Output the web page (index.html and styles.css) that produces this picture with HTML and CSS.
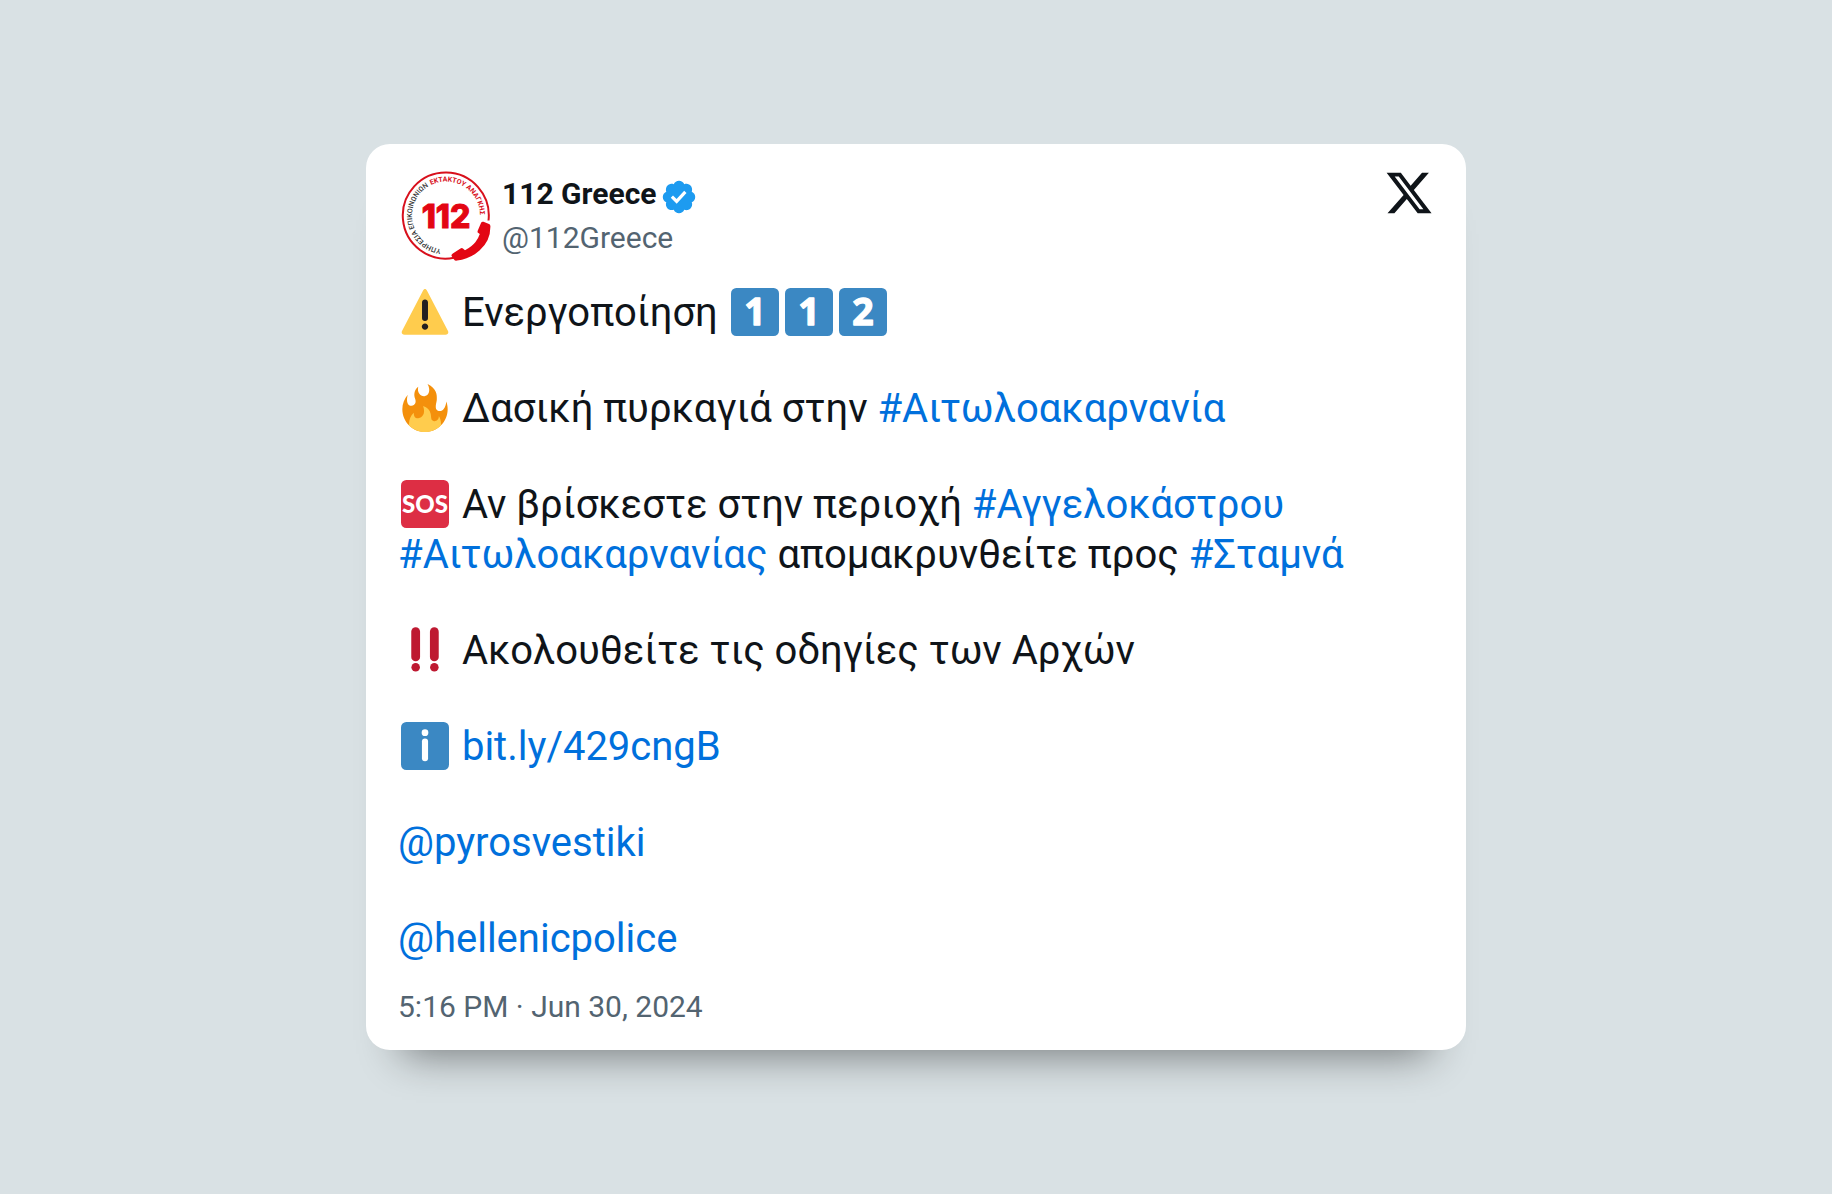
FILE: index.html
```html
<!DOCTYPE html>
<html lang="el">
<head>
    <meta charset="UTF-8">
    <meta name="viewport" content="width=device-width, initial-scale=1.0">
    <title>112 Greece</title>
    <link rel="stylesheet" href="styles.css">
</head>
<body>

    <article class="card">
        <header class="card-header">
            <svg class="avatar" viewBox="0 0 96 96" role="img" aria-label="112">
                <defs>
                    <path id="ring" d="M48 81.5a34 34 0 0 1 0-68a34 34 0 0 1 0 68" />
                </defs>
                <path class="avatar-ring" d="M90.500 52.500A43 43 0 1 0 56 89.800" />
                <text class="ring-text"><textPath href="#ring" startOffset="5">ΥΠΗΡΕΣΙΑ ΕΠΙΚΟΙΝΩΝΙΩΝ</textPath></text>
                <text class="ring-text ring-text-red"><textPath href="#ring" startOffset="91">ΕΚΤΑΚΤΟΥ ΑΝΑΓΚΗΣ</textPath></text>
                <text class="avatar-number" x="48" y="60">112</text>
                <path class="avatar-phone" d="M85.500 53.800L91 56Q92.500 56.500 92.400 58.500Q92.500 73 81.500 82.500Q72 91 59 92.600Q57 93 56 91.500L53.600 88Q53 86.500 54.800 85.400L62.500 80.500Q64 79.600 65.200 80.800L67 82.300Q74 78.500 77.500 74Q80.500 70 81.800 66L80 64.800Q79.200 64 79.800 62.500L83 55Q83.800 53.300 85.500 53.800Z" />
            </svg>
            <div class="author">
                <div class="author-name">
                    <span>112 Greece</span>
                    <svg class="verified" viewBox="0 0 22 22" aria-hidden="true">
                        <path d="M20.396 11c-.018-.646-.215-1.275-.57-1.816-.354-.54-.852-.972-1.438-1.246.223-.607.27-1.264.14-1.897-.131-.634-.437-1.218-.882-1.687-.47-.445-1.053-.75-1.687-.882-.633-.13-1.29-.083-1.897.14-.273-.587-.704-1.086-1.245-1.44S11.647 1.62 11 1.604c-.646.017-1.273.213-1.813.568s-.969.854-1.24 1.44c-.608-.223-1.267-.272-1.902-.14-.635.13-1.22.436-1.69.882-.445.47-.749 1.055-.878 1.688-.13.633-.08 1.29.144 1.896-.587.274-1.087.705-1.443 1.245-.356.54-.555 1.17-.574 1.817.02.647.218 1.276.574 1.817.356.54.856.972 1.443 1.245-.224.606-.274 1.263-.144 1.896.13.634.433 1.218.877 1.688.47.443 1.054.747 1.687.878.633.132 1.29.084 1.897-.136.274.586.705 1.084 1.246 1.439.54.354 1.17.551 1.816.569.647-.016 1.276-.213 1.817-.567s.972-.854 1.245-1.44c.604.239 1.266.296 1.903.164.636-.132 1.22-.447 1.68-.907.46-.46.776-1.044.908-1.681s.075-1.299-.165-1.903c.586-.274 1.084-.705 1.439-1.246.354-.54.551-1.17.569-1.816zM9.662 14.85l-3.429-3.428 1.293-1.302 2.072 2.072 4.4-4.794 1.347 1.246z" />
                    </svg>
                </div>
                <div class="author-handle">@112Greece</div>
            </div>
            <svg class="x-logo" viewBox="0 0 24 24" role="img" aria-label="X">
                <path d="M18.244 2.250h3.308l-7.227 8.260 8.502 11.240H16.170l-5.214-6.817L4.990 21.750H1.680l7.730-8.835L1.254 2.250H8.080l4.713 6.231zm-1.161 17.520h1.833L7.084 4.126H5.117z" />
            </svg>
        </header>

        <div class="card-text">
            <p>
                <svg class="emoji" viewBox="0 0 36 36" aria-hidden="true">
                    <path fill="#ffcc4d" d="M2.653 35C.811 35-.001 33.662.847 32.027L16.456 1.972c.849-1.635 2.238-1.635 3.087 0l15.609 30.056c.85 1.634.037 2.972-1.805 2.972H2.653z" />
                    <path fill="#231f20" d="M15.583 28.953c0-1.333 1.085-2.418 2.419-2.418 1.333 0 2.418 1.085 2.418 2.418 0 1.334-1.086 2.419-2.418 2.419-1.334 0-2.419-1.085-2.419-2.419zm.186-18.293c0-1.302.961-2.108 2.232-2.108 1.241 0 2.233.837 2.233 2.108v11.938c0 1.271-.992 2.108-2.233 2.108-1.271 0-2.232-.807-2.232-2.108V10.660z" />
                </svg>
                Ενεργοποίηση
                <svg class="emoji" viewBox="0 0 36 36"><rect class="key" width="36" height="36" rx="4" /><text class="key-digit" x="18" y="28">1</text></svg><svg class="emoji" viewBox="0 0 36 36"><rect class="key" width="36" height="36" rx="4" /><text class="key-digit" x="18" y="28">1</text></svg><svg class="emoji" viewBox="0 0 36 36"><rect class="key" width="36" height="36" rx="4" /><text class="key-digit" x="18" y="28">2</text></svg>
            </p>
            <p>
                <svg class="emoji" viewBox="0 0 36 36" aria-hidden="true">
                    <path fill="#f4900c" d="M35 19c0-2.062-.367-4.039-1.040-5.868-.46 5.389-3.333 8.157-6.335 6.868-2.812-1.208-.917-5.917-.777-8.164.236-3.809-.012-8.169-6.931-11.794 2.875 5.500.333 8.917-2.333 9.125-2.958.231-5.667-2.542-4.667-7.042-3.238 2.386-3.332 6.402-2.333 9 1.042 2.708-.042 4.958-2.583 5.208-2.840.28-4.418-3.041-2.963-8.333C2.520 10.965 1 14.805 1 19c0 9.389 7.611 17 17 17s17-7.611 17-17z" />
                    <path fill="#ffcc4d" d="M28.394 23.999c.148 3.084-2.561 4.293-4.019 3.709-2.106-.843-1.541-2.291-2.083-5.291s-2.625-5.083-5.708-6c2.250 6.333-1.247 8.667-3.080 9.084-1.872.426-3.753-.001-3.968-4.007C7.352 23.668 6 26.676 6 30c0 .368.023.73.055 1.090C9.125 34.124 13.342 36 18 36s8.875-1.876 11.945-4.910c.032-.36.055-.722.055-1.090 0-2.187-.584-4.236-1.606-6.001z" />
                </svg>
                Δασική πυρκαγιά στην <a href="#">#Αιτωλοακαρνανία</a>
            </p>
            <p>
                <svg class="emoji" viewBox="0 0 36 36"><rect fill="#dd2e44" width="36" height="36" rx="4" /><text class="sos" x="18" y="25">SOS</text></svg>
                Αν βρίσκεστε στην περιοχή <a href="#">#Αγγελοκάστρου</a> <a href="#">#Αιτωλοακαρνανίας</a> απομακρυνθείτε προς <a href="#">#Σταμνά</a>
            </p>
            <p>
                <svg class="emoji" viewBox="0 0 36 36" fill="#be1931" aria-hidden="true">
                    <rect x="7.700" y="1" width="6.600" height="25.500" rx="3.300" />
                    <rect x="21.700" y="1" width="6.600" height="25.500" rx="3.300" />
                    <circle cx="11" cy="31" r="3.200" />
                    <circle cx="25" cy="31" r="3.200" />
                </svg>
                Ακολουθείτε τις οδηγίες των Αρχών
            </p>
            <p>
                <svg class="emoji" viewBox="0 0 36 36" aria-hidden="true">
                    <rect class="key" width="36" height="36" rx="4" />
                    <circle fill="#fff" cx="18" cy="8" r="2.500" />
                    <rect fill="#fff" x="15.700" y="12.400" width="4.600" height="17" rx="2.300" />
                </svg>
                <a href="#">bit.ly/429cngB</a>
            </p>
            <p><a href="#">@pyrosvestiki</a></p>
            <p><a href="#">@hellenicpolice</a></p>
        </div>

        <time class="card-date" datetime="2024-06-30T17:16">5:16 PM · Jun 30, 2024</time>
    </article>

</body>
</html>
```
FILE: styles.css
```css
* {
    box-sizing: border-box;
}
body {
    margin: 0;
    min-height: 100vh;
    padding: 32px;
    display: flex;
    align-items: center;
    justify-content: center;
    background-color: #d9e1e4;
    color: #0f1419;
    font-family: Roboto, 'Liberation Sans', sans-serif;
}
a {
    color: #0070dc;
    text-decoration: none;
}
a:hover {
    text-decoration: underline;
}
.card {
    width: 100%;
    max-width: 1100px;
    padding: 24px 32px;
    background-color: #fff;
    border-radius: 24px;
    box-shadow: 0 40px 40px -36px rgba(0, 0, 0, 0.48);
}
/* Header */
.card-header {
    display: flex;
    align-items: flex-start;
}
.avatar {
    width: 96px;
    height: 96px;
    margin-right: 8px;
    flex: none;
}
.avatar-ring {
    fill: none;
    stroke: #d8101c;
    stroke-width: 2px;
}
.avatar-number {
    font: 800 32px Inter, Roboto, sans-serif;
    text-anchor: middle;
    fill: #e30613;
    stroke: #e30613;
    stroke-width: 1px;
}
.avatar-phone {
    fill: #e30613;
}
.ring-text {
    font-size: 7px;
    font-weight: 500;
    fill: #333;
}
.ring-text-red {
    font-weight: bold;
    fill: #d8101c;
}
.author {
    flex: 1;
    padding-top: 4px;
    font-size: 30px;
    line-height: 44px;
}
.author-name {
    display: flex;
    align-items: flex-end;
    gap: 4px;
    font-weight: bold;
}
.verified {
    width: 38px;
    height: 38px;
    fill: #1d9bf0;
}
.author-handle {
    color: #536471;
}
.x-logo {
    width: 50px;
    height: 50px;
    fill: #0f1419;
}
/* Text */
.card-text {
    margin: 24px 0;
    font-size: 40px;
    line-height: 50px;
}
.card-text p {
    margin: 0 0 46px;
}
.card-text p:last-child {
    margin-bottom: 0;
}
.emoji {
    width: 48px;
    height: 48px;
    margin: 0 3px;
    vertical-align: -10px;
}
.key {
    fill: #3b88c3;
}
.key-digit {
    font: bold 28px 'Open Sans', sans-serif;
    text-anchor: middle;
    fill: #fff;
    stroke: #fff;
    stroke-width: 1px;
    stroke-linejoin: round;
}
.sos {
    font: 900 18px Lato, sans-serif;
    text-anchor: middle;
    fill: #fff;
}
.card-date {
    display: block;
    font-size: 30px;
    line-height: 38px;
    color: #536471;
}
```
